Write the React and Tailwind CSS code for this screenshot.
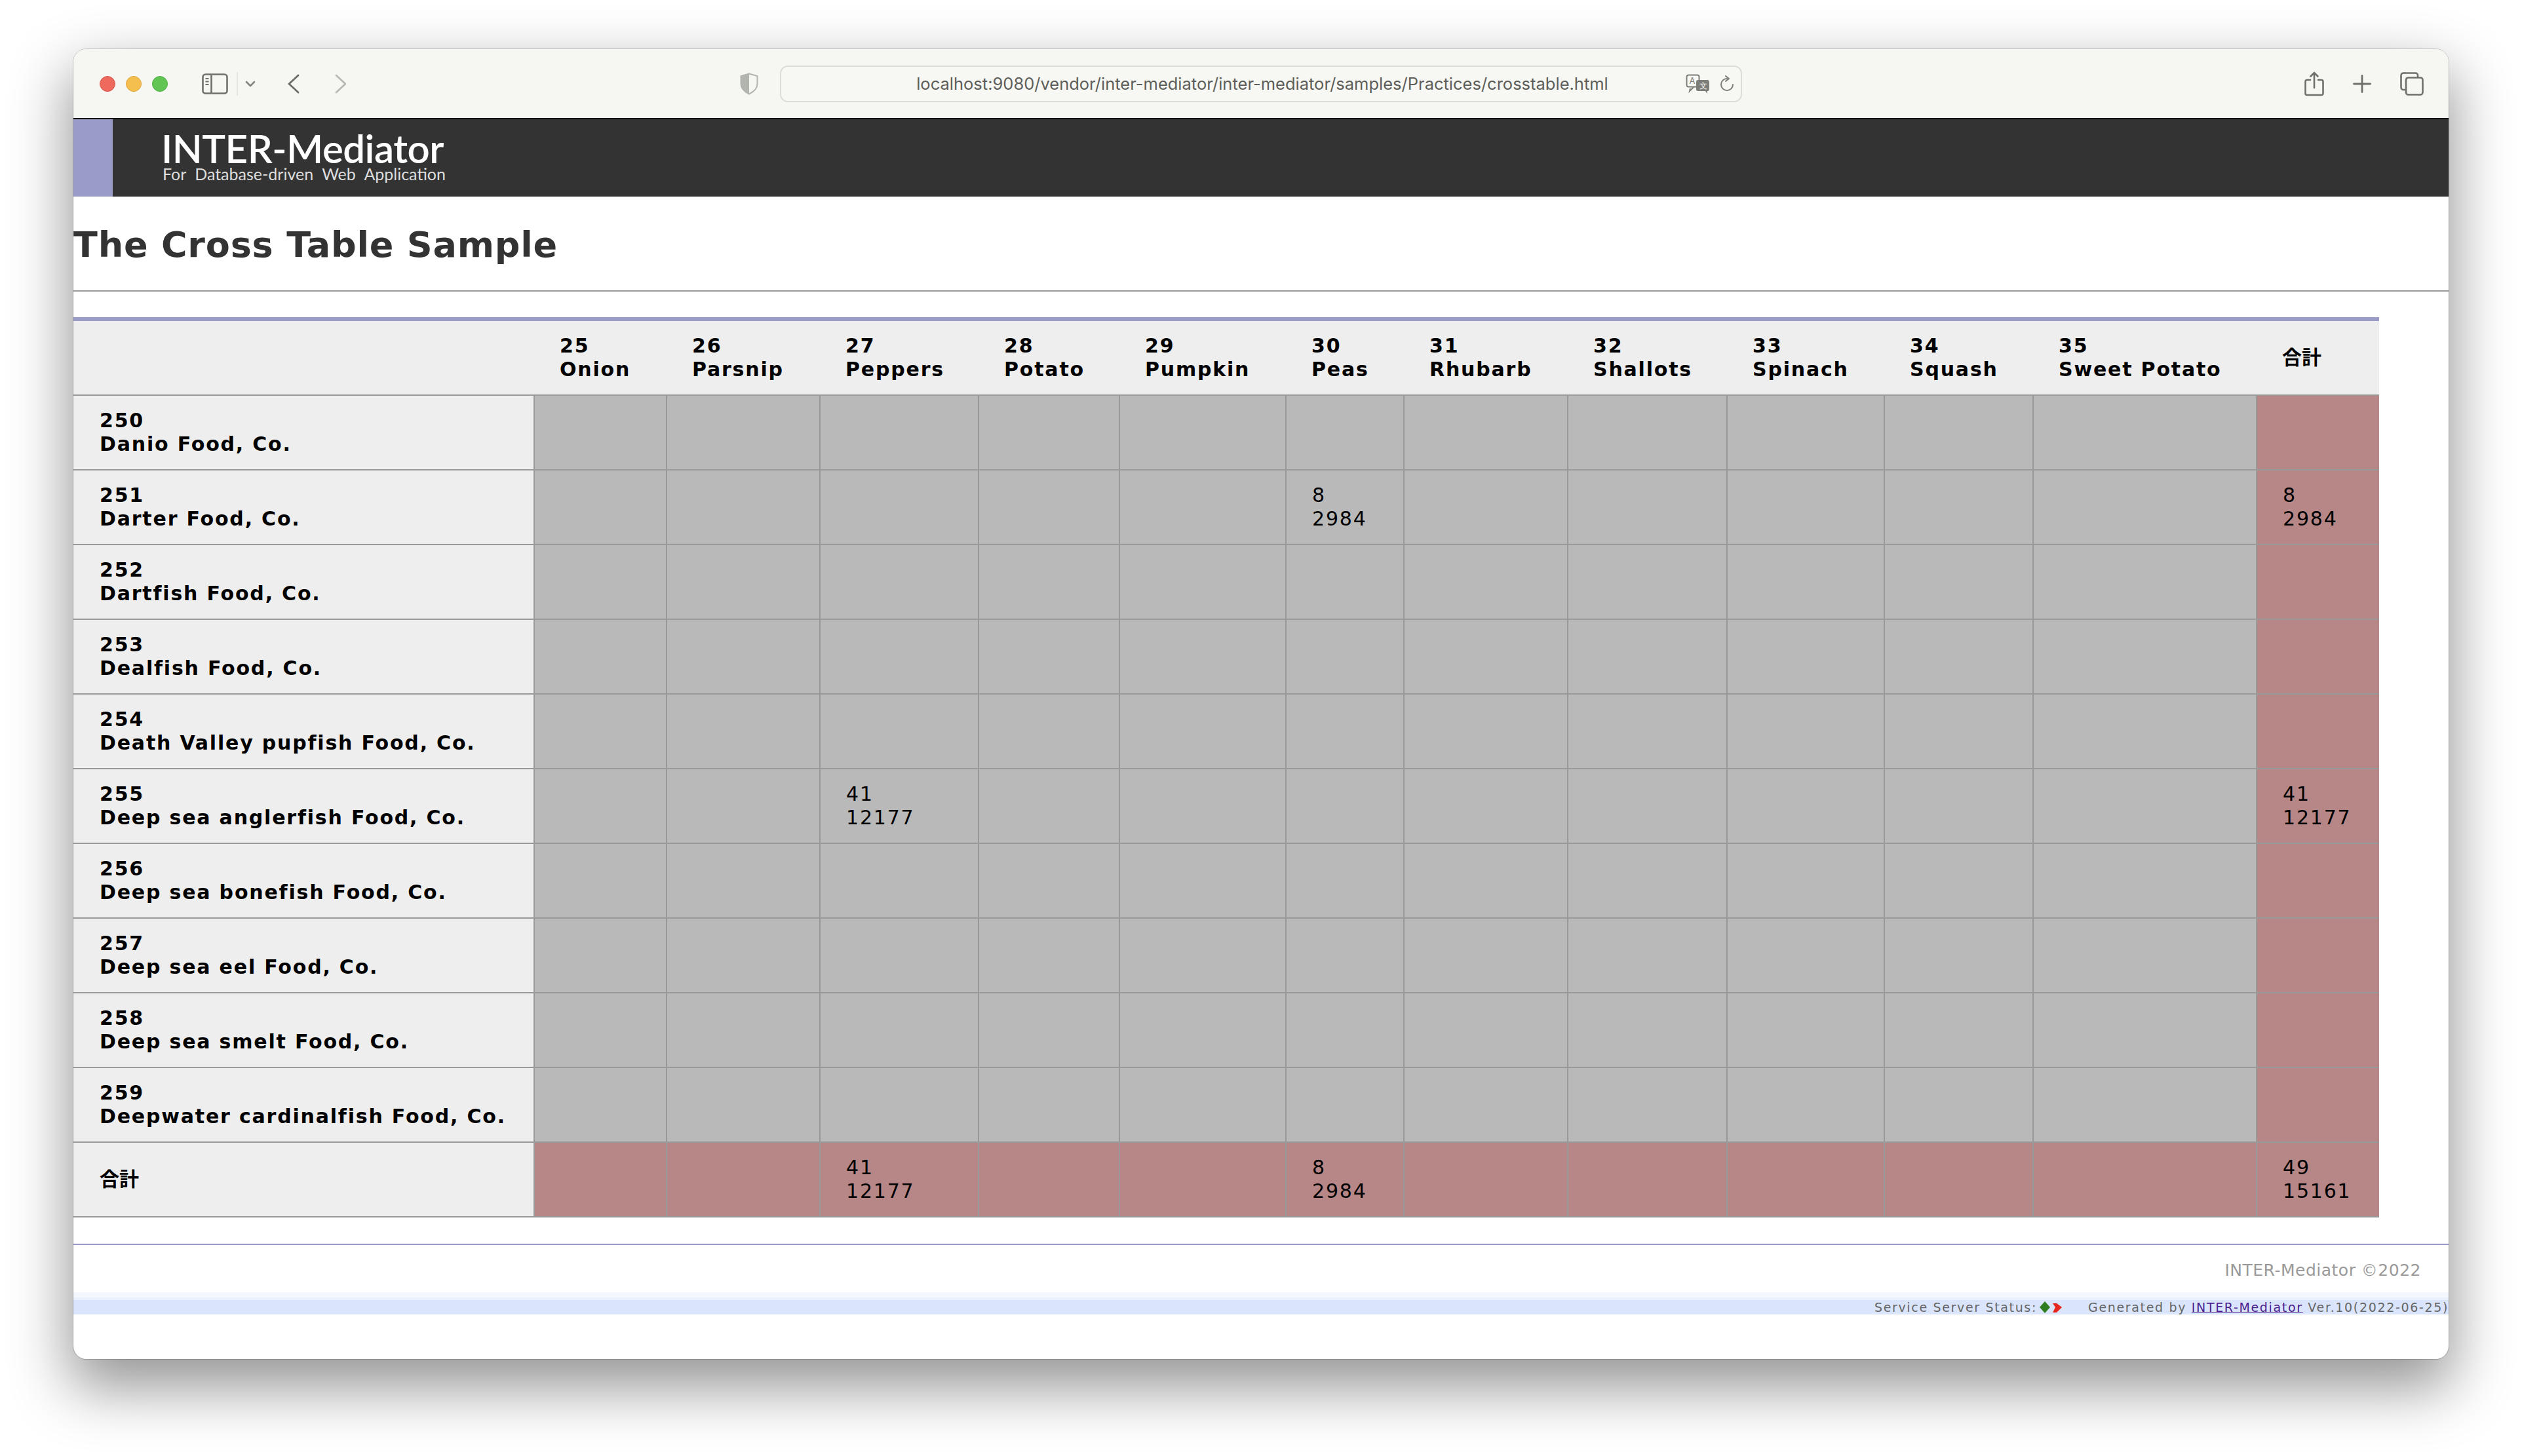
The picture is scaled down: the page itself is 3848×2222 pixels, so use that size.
const cols = [
  ["25", "Onion", 202], ["26", "Parsnip", 234], ["27", "Peppers", 242], ["28", "Potato", 215],
  ["29", "Pumpkin", 254], ["30", "Peas", 180], ["31", "Rhubarb", 250], ["32", "Shallots", 243],
  ["33", "Spinach", 240], ["34", "Squash", 227], ["35", "Sweet Potato", 341],
];
const rows = [
  ["250", "Danio Food, Co."], ["251", "Darter Food, Co.", 5, "8", "2984"], ["252", "Dartfish Food, Co."],
  ["253", "Dealfish Food, Co."], ["254", "Death Valley pupfish Food, Co."],
  ["255", "Deep sea anglerfish Food, Co.", 2, "41", "12177"], ["256", "Deep sea bonefish Food, Co."],
  ["257", "Deep sea eel Food, Co."], ["258", "Deep sea smelt Food, Co."], ["259", "Deepwater cardinalfish Food, Co."],
];
const totals = { 2: ["41", "12177"], 5: ["8", "2984"], 11: ["49", "15161"] };
const cjk = <span className="tracking-normal">合計</span>;

function Pair({ a, b }) {
  return (<><div>{a}</div><div>{b}</div></>);
}
function Cell({ kind, children }) {
  const bg = kind === "pink" ? "bg-[#b68786]" : "bg-[#b9b9b9]";
  return <td className={`${bg} border-l-2 border-t-2 border-[#999999] pl-[39px] align-middle font-normal`}>{children}</td>;
}

export default function App() {
  return (
    <div className="w-[3848px] h-[2222px] bg-white pl-[112px] pt-[75px] overflow-hidden font-['DejaVu_Sans',sans-serif]">
      <div className="w-[3624px] h-[1999px] rounded-[20px] overflow-hidden bg-white flex flex-col shadow-[0_0_0_1px_rgba(0,0,0,0.18),0_38px_90px_6px_rgba(0,0,0,0.42)]">
        {/* toolbar */}
        <div className="h-[105px] shrink-0 bg-[#f6f7f3] flex items-center pl-[40px] pt-[1px]">
          <span className="w-[24px] h-[24px] rounded-full bg-[#ee6a5f] border border-[#d9544a]" />
          <span className="w-[24px] h-[24px] rounded-full bg-[#f5bf4f] border border-[#dfa53c] ml-[16px]" />
          <span className="w-[24px] h-[24px] rounded-full bg-[#61c554] border border-[#52ae46] ml-[16px]" />
          <svg className="ml-[52px]" width="40" height="32" viewBox="0 0 40 32" fill="none" stroke="#6f706b" strokeWidth="2.6">
            <rect x="1.5" y="1.5" width="37" height="29" rx="4" />
            <path d="M14.5 2v28" />
            <path d="M5.5 8h5M5.5 12.5h5M5.5 17h5" strokeWidth="1.8" />
          </svg>
          <span className="w-[2px] h-[36px] bg-[#e4e5e1] ml-[13px]" />
          <svg className="ml-[11px]" width="16" height="10" viewBox="0 0 16 10" fill="none" stroke="#84857f" strokeWidth="2.6" strokeLinecap="round" strokeLinejoin="round">
            <path d="M2 2l6 6 6-6" />
          </svg>
          <svg className="ml-[49px]" width="18" height="30" viewBox="0 0 18 30" fill="none" stroke="#6a6b66" strokeWidth="2.8" strokeLinecap="round" strokeLinejoin="round">
            <path d="M16 2L2 15l14 13" />
          </svg>
          <svg className="ml-[54px]" width="18" height="30" viewBox="0 0 18 30" fill="none" stroke="#b8b9b4" strokeWidth="2.8" strokeLinecap="round" strokeLinejoin="round">
            <path d="M2 2l14 13L2 28" />
          </svg>
          <svg className="ml-[599px]" width="30" height="34" viewBox="0 0 30 34" fill="none">
            <path d="M15 1.5l12.5 3.5v12c0 7-5.5 12-12.5 15.500C8 29 2.500 24 2.500 17V5z" fill="#f6f7f3" stroke="#b2b4ae" strokeWidth="2" />
            <path d="M15 2v29.500C8.500 28.500 3 24 3 17V5.500z" fill="#b2b4ae" />
          </svg>
          <div className="ml-[32px] w-[1468px] h-[56px] rounded-[12px] border-2 border-[#dcddd8] bg-[#f7f8f4] flex items-center relative">
            <span className="w-full text-center text-[#5d5e5a] text-[25.5px] font-['Inter',sans-serif] leading-none pl-[4px]">localhost:9080/vendor/inter-mediator/inter-mediator/samples/Practices/crosstable.html</span>
            <svg className="absolute left-[1380px] top-[11px]" width="38" height="30" viewBox="0 0 38 30" fill="none">
              <rect x="1.500" y="1.500" width="19" height="18" rx="3" fill="#f7f8f4" stroke="#7c7d78" strokeWidth="2" />
              <path d="M7 22l-1 4 6-6" stroke="#7c7d78" strokeWidth="2" />
              <text x="5.500" y="15" fontSize="13" fill="#7c7d78" fontFamily="Inter, sans-serif">A</text>
              <rect x="16" y="9" width="20" height="17" rx="3" fill="#7c7d78" />
              <path d="M30 26l3 4v-4z" fill="#7c7d78" />
              <text x="21" y="22" fontSize="12" fill="#f7f8f4" fontFamily="Inter, sans-serif">文</text>
            </svg>
            <svg className="absolute left-[1432px] top-[13px]" width="22" height="26" viewBox="0 0 22 26" fill="none" stroke="#7c7d78" strokeWidth="2" strokeLinecap="round" strokeLinejoin="round">
              <path d="M11 5a9 9 0 1 0 9 9" />
              <path d="M9 1l5 4-5 4" />
            </svg>
          </div>
          <svg className="ml-[858px]" width="30" height="38" viewBox="0 0 30 38" fill="none" stroke="#6f706b" strokeWidth="2.600" strokeLinecap="round" strokeLinejoin="round">
            <path d="M9 13H4a2.500 2.500 0 0 0-2.500 2.500v18A2.500 2.500 0 0 0 4 36h22a2.500 2.500 0 0 0 2.500-2.500v-18A2.500 2.500 0 0 0 26 13h-5" />
            <path d="M15 25V2M9.500 7.500L15 2l5.500 5.500" />
          </svg>
          <svg className="ml-[44px]" width="28" height="28" viewBox="0 0 28 28" fill="none" stroke="#6f706b" strokeWidth="2.800" strokeLinecap="round">
            <path d="M14 1.500v25M1.500 14h25" />
          </svg>
          <svg className="ml-[44px]" width="36" height="36" viewBox="0 0 36 36" fill="none" stroke="#6f706b" strokeWidth="2.600" strokeLinejoin="round">
            <path d="M8 27H5a3.500 3.500 0 0 1-3.500-3.500V5A3.500 3.500 0 0 1 5 1.500h18.500A3.500 3.500 0 0 1 27 5v3" />
            <rect x="9" y="8.500" width="25.500" height="26" rx="3.500" />
          </svg>
        </div>

        {/* site header */}
        <div className="h-[120px] shrink-0 bg-[#333333] border-t-2 border-[#111111] flex">
          <div className="w-[60px] bg-[#9b9bc8]" />
          <div className="pl-[74px] pt-[21px] text-white font-['Lato',sans-serif]">
            <div className="text-[60px] leading-[46px] font-semibold tracking-[-0.5px]">INTER-Mediator</div>
            <div className="text-[25px] leading-[24px] mt-[4px] pl-[2px] text-[#dddddd] [word-spacing:7px]">For Database-driven Web Application</div>
          </div>
        </div>

        {/* title */}
        <div className="h-[145px] shrink-0 border-b-2 border-[#999999] pt-[42px]">
          <h1 className="text-[54px] leading-[64px] font-bold text-[#333333] tracking-[0.8px]">The Cross Table Sample</h1>
        </div>

        {/* cross table */}
        <table className="mt-[39px] w-[3518px] table-fixed border-separate border-spacing-0 text-[30px] leading-[36px] tracking-[1.8px] text-black font-['DejaVu_Sans','Noto_Sans_CJK_JP',sans-serif]">
          <colgroup>
            <col className="w-[702px]" />
            {cols.map((c) => <col key={c[0]} style={{ width: c[2] }} />)}
            <col className="w-[188px]" />
          </colgroup>
          <thead>
            <tr className="h-[118px] bg-[#eeeeee] font-bold">
              <th className="border-t-[6px] border-[#9b9bc8]" />
              {cols.map((c) => (
                <th key={c[0]} className="border-t-[6px] border-[#9b9bc8] pl-[40px] text-left font-bold align-middle">
                  <Pair a={c[0]} b={c[1]} />
                </th>
              ))}
              <th className="border-t-[6px] border-[#9b9bc8] pl-[40px] text-left font-bold align-middle">{cjk}</th>
            </tr>
          </thead>
          <tbody>
            {rows.map((r) => (
              <tr key={r[0]} className="h-[114px]">
                <th className="bg-[#eeeeee] border-t-2 border-[#999999] pl-[40px] text-left font-bold align-middle">
                  <Pair a={r[0]} b={r[1]} />
                </th>
                {cols.map((c, i) => (
                  <Cell key={c[0]}>{r[2] === i ? <Pair a={r[3]} b={r[4]} /> : null}</Cell>
                ))}
                <Cell kind="pink">{r[2] !== undefined ? <Pair a={r[3]} b={r[4]} /> : null}</Cell>
              </tr>
            ))}
            <tr className="h-[116px]">
              <th className="bg-[#eeeeee] border-y-2 border-[#999999] pl-[40px] text-left font-bold align-middle">{cjk}</th>
              {[...cols, null].map((c, i) => (
                <td key={i} className="bg-[#b68786] border-l-2 border-y-2 border-[#999999] pl-[39px] align-middle">
                  {totals[i] ? <Pair a={totals[i][0]} b={totals[i][1]} /> : null}
                </td>
              ))}
            </tr>
          </tbody>
        </table>

        {/* footer */}
        <div className="mt-[40px] border-t-2 border-[#9b9bc8] pt-[24px] pr-[42px] text-right text-[25px] leading-[30px] tracking-[0.5px] text-[#999999]">
          INTER-Mediator ©2022
        </div>
        <div className="mt-[18px] h-[34px] bg-[linear-gradient(#f5f7ff_0,#f5f7ff_8px,#ebf0fe_8px,#ebf0fe_12px,#dae5fb_12px)] flex justify-end items-end text-[19px] leading-[22px] tracking-[1.66px] text-[#666666]">
          <span className="flex items-center">
            Service Server Status:
            <svg className="ml-[3px]" width="36" height="20" viewBox="0 0 36 20">
              <path d="M9 1l8 9-8 9-8-9z" fill="#2f7d1f" />
              <path d="M21 4h6l8 6-8 8h-6l4-8z" fill="#e5261f" />
            </svg>
          </span>
          <span className="ml-[39px]">
            Generated by <span className="text-[#4b1e8f] underline">INTER-Mediator</span> Ver.10(2022-06-25)
          </span>
        </div>
      </div>
    </div>
  );
}
